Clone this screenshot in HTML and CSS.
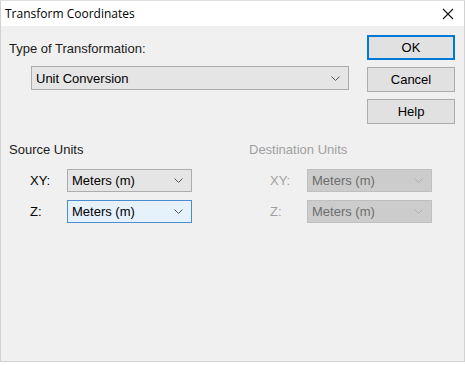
FILE: index.html
```html
<!DOCTYPE html>
<html lang="en">
<head>
    <meta charset="UTF-8">
    <title>Transform Coordinates</title>
    <link rel="stylesheet" href="styles.css">
</head>
<body>
    <div class="window">
        <div class="titlebar">
            <span class="title">Transform Coordinates</span>
            <svg class="close" width="12" height="12" viewBox="0 0 12 12"><path d="M1 1 L11 11 M11 1 L1 11" stroke="#111" stroke-width="1.1" fill="none"/></svg>
        </div>
        <div class="content">
            <div class="toprow">
                <div class="typebox">
                    <div class="label">Type of Transformation:</div>
                    <div class="combo wide">
                        <span>Unit Conversion</span>
                        <svg class="chev" width="9" height="5" viewBox="0 0 9 5"><path d="M0.5 0.5 L4.5 4.5 L8.5 0.5" stroke="#555" fill="none"/></svg>
                    </div>
                </div>
                <div class="buttons">
                    <button class="btn default">OK</button>
                    <button class="btn">Cancel</button>
                    <button class="btn">Help</button>
                </div>
            </div>
            <div class="units">
                <div class="group source">
                    <div class="label">Source Units</div>
                    <div class="row">
                        <span class="rowlabel">XY:</span>
                        <div class="combo small">
                            <span>Meters (m)</span>
                            <svg class="chev" width="9" height="5" viewBox="0 0 9 5"><path d="M0.5 0.5 L4.5 4.5 L8.5 0.5" stroke="#555" fill="none"/></svg>
                        </div>
                    </div>
                    <div class="row">
                        <span class="rowlabel">Z:</span>
                        <div class="combo small hover">
                            <span>Meters (m)</span>
                            <svg class="chev" width="9" height="5" viewBox="0 0 9 5"><path d="M0.5 0.5 L4.5 4.5 L8.5 0.5" stroke="#555" fill="none"/></svg>
                        </div>
                    </div>
                </div>
                <div class="group disabled">
                    <div class="label">Destination Units</div>
                    <div class="row">
                        <span class="rowlabel">XY:</span>
                        <div class="combo small">
                            <span>Meters (m)</span>
                            <svg class="chev" width="9" height="5" viewBox="0 0 9 5"><path d="M0.5 0.5 L4.5 4.5 L8.5 0.5" stroke="#b0b0b0" fill="none"/></svg>
                        </div>
                    </div>
                    <div class="row">
                        <span class="rowlabel">Z:</span>
                        <div class="combo small">
                            <span>Meters (m)</span>
                            <svg class="chev" width="9" height="5" viewBox="0 0 9 5"><path d="M0.5 0.5 L4.5 4.5 L8.5 0.5" stroke="#b0b0b0" fill="none"/></svg>
                        </div>
                    </div>
                </div>
            </div>
        </div>
    </div>
</body>
</html>
```

FILE: styles.css
```css
* {box-sizing: border-box}
body {
    margin: 0;
    padding: 0;
    background-color: #ffffff;
    font-family: "Liberation Sans", Arial, sans-serif;
    font-size: 13px;
    color: #000;
}
.window {
    width: 465px;
    height: 362px;
    border: 1px solid #d2d2d2;
    border-top-color: #e0e0e0;
    display: flex;
    flex-direction: column;
    box-shadow: 4px 2px 0 -1px #dcdcdc;
}
.titlebar {
    height: 25px;
    background: #ffffff;
    display: flex;
    align-items: center;
    justify-content: space-between;
    padding: 0 10px 0 4px;
}
.title {
    font-family: "Open Sans", "Noto Sans", sans-serif;
    font-size: 12px;
    color: #000;
}
.content {
    flex: 1;
    background: #f0f0f0;
    padding: 9px 9px 0 8px;
}
.toprow {
    display: flex;
    justify-content: space-between;
}
.typebox .label {
    margin-top: 6px;
}
.label {
    line-height: 15px;
    color: #1a1a1a;
}
.combo {
    display: flex;
    align-items: center;
    justify-content: space-between;
    background: #e5e5e5;
    border: 1px solid #adadad;
    padding: 0 8px 0 4px;
    color: #000;
}
.combo.wide {
    width: 318px;
    height: 24px;
    margin: 10px 0 0 22px;
}
.combo.small {
    width: 125px;
    height: 23px;
}
.combo.hover {
    background: #e5f1fb;
    border-color: #4d8ccb;
}
.buttons {
    display: flex;
    flex-direction: column;
    gap: 7px;
}
.btn {
    width: 88px;
    height: 25px;
    background: #e1e1e1;
    border: 1px solid #adadad;
    font-family: "Liberation Sans", Arial, sans-serif;
    font-size: 13px;
    color: #000;
    padding: 0;
}
.btn.default {
    border: 2px solid #0078d7;
}
.units {
    display: flex;
    margin-top: 18px;
}
.group {
    flex: 1;
}
.group.source {
    flex: 0 0 240px;
}
.group .row {
    display: flex;
    align-items: center;
    margin-top: 8px;
}
.group .label + .row {
    margin-top: 12px;
}
.rowlabel {
    width: 58px;
    padding-left: 21px;
}
.group.disabled .label,
.group.disabled .rowlabel {
    color: #a0a0a0;
}
.group.disabled .combo {
    background: #cccccc;
    border-color: #bfbfbf;
    color: #6d6d6d;
}
```
